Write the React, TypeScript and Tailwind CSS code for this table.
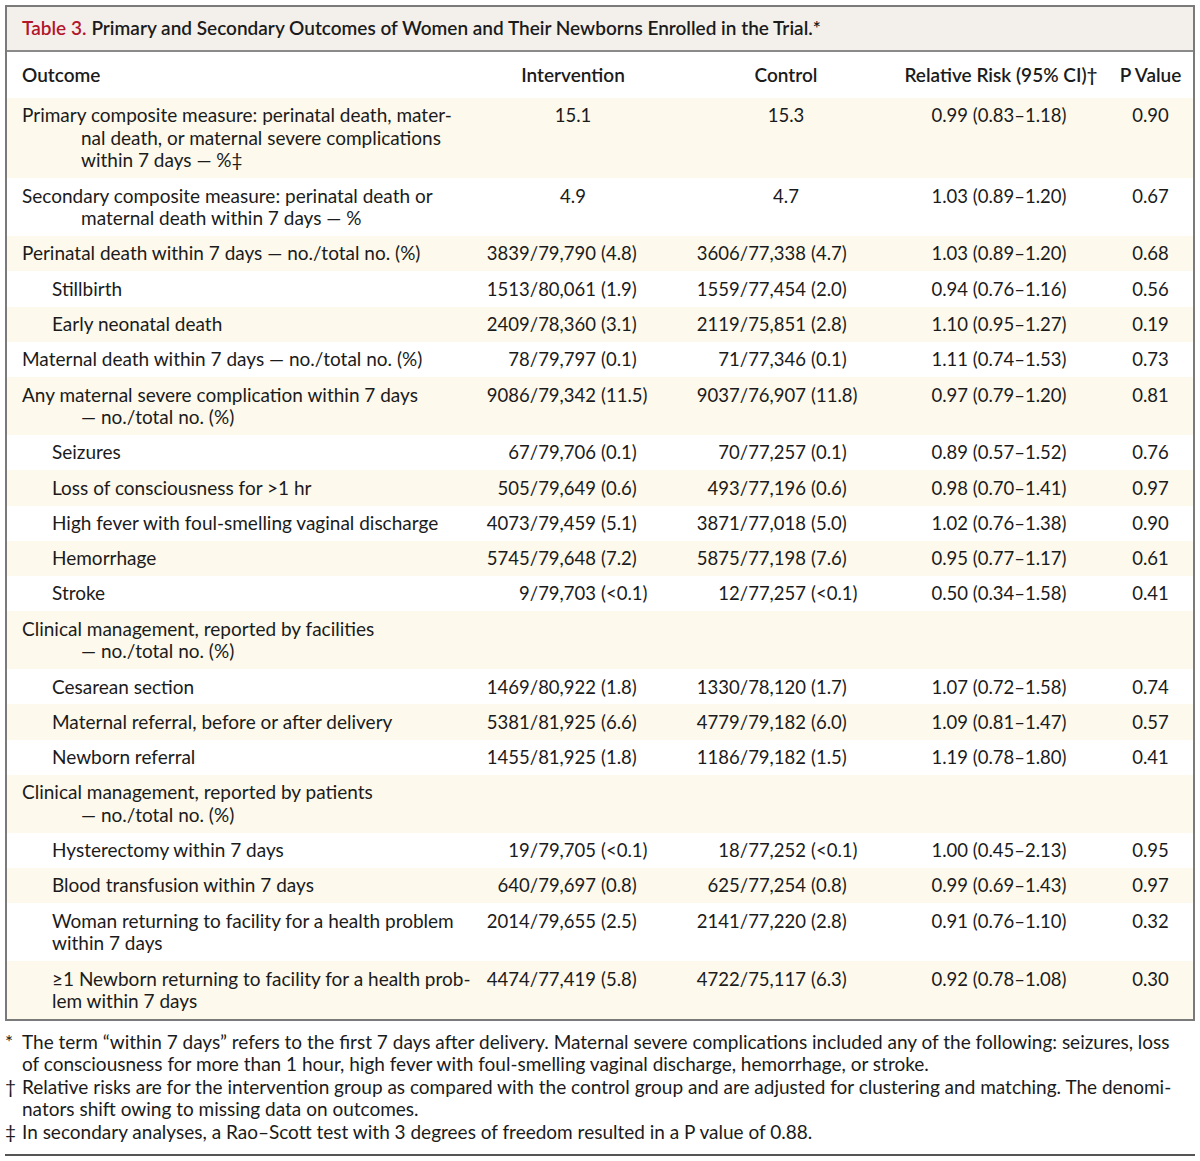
import React from "react";

type Row = {
    lines: string[];
    indent?: boolean;
    cream: boolean;
    inter?: string;
    control?: string;
    rr?: string;
    p?: string;
};

const rows: Row[] = [
    {
        lines: ["Primary composite measure: perinatal death, mater-", "nal death, or maternal severe complications", "within 7 days — %‡"],
        cream: true, inter: "15.1", control: "15.3", rr: "0.99 (0.83–1.18)", p: "0.90",
    },
    {
        lines: ["Secondary composite measure: perinatal death or", "maternal death within 7 days — %"],
        cream: false, inter: "4.9", control: "4.7", rr: "1.03 (0.89–1.20)", p: "0.67",
    },
    {
        lines: ["Perinatal death within 7 days — no./total no. (%)"],
        cream: true, inter: "3839/79,790 (4.8)", control: "3606/77,338 (4.7)", rr: "1.03 (0.89–1.20)", p: "0.68",
    },
    { lines: ["Stillbirth"], indent: true, cream: false, inter: "1513/80,061 (1.9)", control: "1559/77,454 (2.0)", rr: "0.94 (0.76–1.16)", p: "0.56" },
    { lines: ["Early neonatal death"], indent: true, cream: true, inter: "2409/78,360 (3.1)", control: "2119/75,851 (2.8)", rr: "1.10 (0.95–1.27)", p: "0.19" },
    {
        lines: ["Maternal death within 7 days — no./total no. (%)"],
        cream: false, inter: "78/79,797 (0.1)", control: "71/77,346 (0.1)", rr: "1.11 (0.74–1.53)", p: "0.73",
    },
    {
        lines: ["Any maternal severe complication within 7 days", "— no./total no. (%)"],
        cream: true, inter: "9086/79,342 (11.5)", control: "9037/76,907 (11.8)", rr: "0.97 (0.79–1.20)", p: "0.81",
    },
    { lines: ["Seizures"], indent: true, cream: false, inter: "67/79,706 (0.1)", control: "70/77,257 (0.1)", rr: "0.89 (0.57–1.52)", p: "0.76" },
    { lines: ["Loss of consciousness for >1 hr"], indent: true, cream: true, inter: "505/79,649 (0.6)", control: "493/77,196 (0.6)", rr: "0.98 (0.70–1.41)", p: "0.97" },
    { lines: ["High fever with foul-smelling vaginal discharge"], indent: true, cream: false, inter: "4073/79,459 (5.1)", control: "3871/77,018 (5.0)", rr: "1.02 (0.76–1.38)", p: "0.90" },
    { lines: ["Hemorrhage"], indent: true, cream: true, inter: "5745/79,648 (7.2)", control: "5875/77,198 (7.6)", rr: "0.95 (0.77–1.17)", p: "0.61" },
    { lines: ["Stroke"], indent: true, cream: false, inter: "9/79,703 (<0.1)", control: "12/77,257 (<0.1)", rr: "0.50 (0.34–1.58)", p: "0.41" },
    { lines: ["Clinical management, reported by facilities", "— no./total no. (%)"], cream: true },
    { lines: ["Cesarean section"], indent: true, cream: false, inter: "1469/80,922 (1.8)", control: "1330/78,120 (1.7)", rr: "1.07 (0.72–1.58)", p: "0.74" },
    { lines: ["Maternal referral, before or after delivery"], indent: true, cream: true, inter: "5381/81,925 (6.6)", control: "4779/79,182 (6.0)", rr: "1.09 (0.81–1.47)", p: "0.57" },
    { lines: ["Newborn referral"], indent: true, cream: false, inter: "1455/81,925 (1.8)", control: "1186/79,182 (1.5)", rr: "1.19 (0.78–1.80)", p: "0.41" },
    { lines: ["Clinical management, reported by patients", "— no./total no. (%)"], cream: true },
    { lines: ["Hysterectomy within 7 days"], indent: true, cream: false, inter: "19/79,705 (<0.1)", control: "18/77,252 (<0.1)", rr: "1.00 (0.45–2.13)", p: "0.95" },
    { lines: ["Blood transfusion within 7 days"], indent: true, cream: true, inter: "640/79,697 (0.8)", control: "625/77,254 (0.8)", rr: "0.99 (0.69–1.43)", p: "0.97" },
    {
        lines: ["Woman returning to facility for a health problem", "within 7 days"],
        indent: true, cream: false, inter: "2014/79,655 (2.5)", control: "2141/77,220 (2.8)", rr: "0.91 (0.76–1.10)", p: "0.32",
    },
    {
        lines: ["≥1 Newborn returning to facility for a health prob-", "lem within 7 days"],
        indent: true, cream: true, inter: "4474/77,419 (5.8)", control: "4722/75,117 (6.3)", rr: "0.92 (0.78–1.08)", p: "0.30",
    },
];

const notes = [
    {
        mark: "*",
        lines: [
            "The term “within 7 days” refers to the first 7 days after delivery. Maternal severe complications included any of the following: seizures, loss",
            "of consciousness for more than 1 hour, high fever with foul-smelling vaginal discharge, hemorrhage, or stroke.",
        ],
    },
    {
        mark: "†",
        lines: [
            "Relative risks are for the intervention group as compared with the control group and are adjusted for clustering and matching. The denomi-",
            "nators shift owing to missing data on outcomes.",
        ],
    },
    { mark: "‡", lines: ["In secondary analyses, a Rao–Scott test with 3 degrees of freedom resulted in a P value of 0.88."] },
];

// count cells like "3839/79,790 (4.8)" line up on the opening paren
function CountCell({ value, lead }: { value?: string; lead: string }) {
    if (!value) return <div />;
    const i = value.indexOf(" (");
    if (i < 0) return <div className="text-center text-[18.5px]">{value}</div>;
    return (
        <div className="flex whitespace-nowrap text-[18.5px]">
            <span className={`${lead} text-right`}>{value.slice(0, i)}</span>
            <span className="ml-[5px]">{value.slice(i + 1)}</span>
        </div>
    );
}

const grid = "grid grid-cols-[469px_194px_232px_198px_1fr]";

export default function App() {
    return (
        <div className="w-[1200px] min-h-[1161px] bg-white px-[5px] pt-[5px] text-[19px] text-[#1b1b1b] font-['Lato','Liberation_Sans',sans-serif]">
            <div className="border-2 border-[#7a7a7a]">
                <div className="h-[45px] bg-[#f3f0ec] border-b-2 border-[#8a8a8a] flex items-center pl-[15px] text-[19px] font-semibold whitespace-nowrap">
                    <span className="text-[#b3162b]">Table 3.</span>
                    <span className="ml-[5px]">Primary and Secondary Outcomes of Women and Their Newborns Enrolled in the Trial.*</span>
                </div>
                <div className={`${grid} h-[46px] items-center font-semibold whitespace-nowrap`}>
                    <div className="pl-[15px]">Outcome</div>
                    <div className="text-center">Intervention</div>
                    <div className="text-center">Control</div>
                    <div className="text-center">Relative Risk (95% CI)†</div>
                    <div className="text-center pl-[8px]">P Value</div>
                </div>
                {rows.map((r, k) => (
                    <div
                        key={k}
                        className={`${grid} items-start py-[6.4px] leading-[22.5px] whitespace-nowrap ${r.cream ? "bg-[#fdf9ec]" : "bg-white"}`}
                    >
                        <div className={r.indent ? "pl-[45px]" : "pl-[15px]"}>
                            {r.lines.map((l, j) => (
                                <div key={j} className={j > 0 && !r.indent ? "pl-[59px]" : ""}>
                                    {l}
                                </div>
                            ))}
                        </div>
                        <CountCell value={r.inter} lead="w-[120px]" />
                        <CountCell value={r.control} lead="w-[136px]" />
                        <div className="text-center text-[18.5px] pr-[4px]">{r.rr}</div>
                        <div className="text-center text-[18.5px] pl-[8px]">{r.p}</div>
                    </div>
                ))}
            </div>
            <div className="mt-[10px] leading-[22.5px] whitespace-nowrap">
                {notes.map(n => (
                    <div key={n.mark} className="flex">
                        <span className="w-[17px] shrink-0">{n.mark}</span>
                        <div>
                            {n.lines.map((l, j) => (
                                <div key={j}>{l}</div>
                            ))}
                        </div>
                    </div>
                ))}
            </div>
            <div className="mt-[11px] h-[2px] bg-[#555]" />
        </div>
    );
}
